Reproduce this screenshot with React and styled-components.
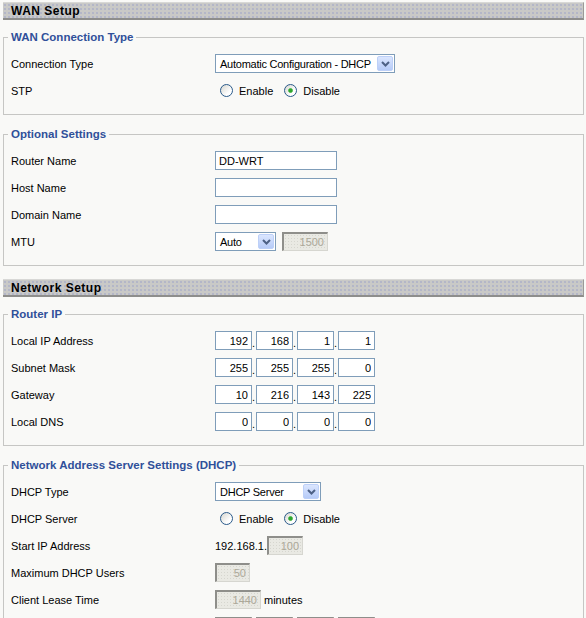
import React from "react";
import styled, { createGlobalStyle } from "styled-components";

const GlobalStyle = createGlobalStyle`
  html, body {
    margin: 0;
    padding: 0;
    background: #f9f9f7;
  }
  body {
    font-family: "Liberation Sans", Arial, sans-serif;
    font-size: 11px;
    color: #000;
  }
`;

const Page = styled.div`
  padding: 2px 2px 0 3px;
  height: 616px;
  overflow: hidden;
`;

const SectionBar = styled.h2`
  margin: 0 0 11px;
  height: 18px;
  box-sizing: border-box;
  padding-left: 8px;
  display: flex;
  align-items: center;
  font-size: 12px;
  font-weight: bold;
  letter-spacing: 0.5px;
  color: #000;
  background-color: #c9c9c7;
  background-image: radial-gradient(#b3b6c8 0.7px, transparent 0.9px);
  background-size: 4px 4px;
  border-top: 1px solid #d8d8d6;
  border-right: 1px solid #9a9a98;
  border-bottom: 2px solid #8e8e8c;
`;

const Group = styled.fieldset`
  margin: 0 0 13px;
  padding: 6px 7px 10px;
  border: 1px solid #c6c6c4;
  min-width: 0;
`;

const Legend = styled.legend`
  padding: 0 3px;
  margin-left: -3px;
  line-height: 13px;
  font-weight: bold;
  font-size: 11.5px;
  color: #30509a;
`;

const Row = styled.div`
  display: flex;
  align-items: center;
  height: 27px;
`;

const Label = styled.div`
  width: 204px;
  flex: none;
`;

const Control = styled.div`
  display: flex;
  align-items: center;
  gap: ${({ $gap }) => $gap || 0}px;
`;

const SelectBox = styled.div`
  display: inline-flex;
  align-items: center;
  width: ${({ $w }) => $w}px;
  height: 19px;
  box-sizing: border-box;
  border: 1px solid #7f9db9;
  background: #fff;
`;

const SelectText = styled.span`
  flex: 1;
  padding-left: 4px;
  letter-spacing: -0.25px;
  white-space: nowrap;
  overflow: hidden;
`;

const DropButton = styled.span`
  width: 16px;
  height: 15px;
  margin-right: 1px;
  box-sizing: border-box;
  border: 1px solid #bdd0f8;
  border-radius: 2px;
  background: linear-gradient(#dbe6fe, #b6cbf8);
  display: flex;
  align-items: center;
  justify-content: center;
  flex: none;
`;

const TextField = styled.input`
  width: ${({ $w }) => $w}px;
  height: 19px;
  box-sizing: border-box;
  margin: 0;
  padding: 0 3px;
  border: 1px solid #7f9db9;
  background: #fff;
  font-family: "Liberation Sans", Arial, sans-serif;
  font-size: 11px;
  color: #000;
  text-align: ${({ $align }) => $align || "left"};
  outline: none;

  &:disabled {
    color: #aca899;
    background-color: #e9e9e3;
    background-image: radial-gradient(#d6d6cf 0.6px, transparent 0.8px);
    background-size: 3px 3px;
    border-width: 2px 1px 1px 2px;
    border-color: #8e8e8a #d6d6d0 #d6d6d0 #8e8e8a;
    padding-right: 3px;
  }
`;

const Dot = styled.span`
  width: 4px;
  align-self: flex-end;
  line-height: 14px;
  text-align: left;
`;

const RadioOption = styled.label`
  display: inline-flex;
  align-items: center;
  gap: 6px;
  margin-left: 5px;

  & + & {
    margin-left: 11px;
  }
`;

const RadioCircle = styled.span`
  width: 13px;
  height: 13px;
  box-sizing: border-box;
  border-radius: 50%;
  border: 1px solid #2a5a8a;
  background: ${({ $on }) =>
    $on
      ? "radial-gradient(circle, #2ea62e 0 1.6px, #79c879 2.2px, transparent 2.8px), linear-gradient(135deg, #d6d6cf, #ffffff 70%)"
      : "linear-gradient(135deg, #d6d6cf, #ffffff 70%)"};
`;

const Suffix = styled.span`
  margin-left: 3px;
`;

const Chevron = () => (
  <svg width="9" height="6" viewBox="0 0 9 6">
    <path d="M1 1 L4.5 4.5 L8 1" stroke="#4d6185" strokeWidth="2" fill="none" />
  </svg>
);

const Select = ({ width, value }) => (
  <SelectBox $w={width}>
    <SelectText>{value}</SelectText>
    <DropButton>
      <Chevron />
    </DropButton>
  </SelectBox>
);

const Radios = ({ checked }) => (
  <Control>
    <RadioOption>
      <RadioCircle $on={checked === "enable"} />
      Enable
    </RadioOption>
    <RadioOption>
      <RadioCircle $on={checked === "disable"} />
      Disable
    </RadioOption>
  </Control>
);

const IpField = ({ values, disabled }) => (
  <Control>
    {values.map((v, i) => (
      <React.Fragment key={i}>
        <TextField $w={37} $align="right" value={v} readOnly disabled={disabled} />
        {i < values.length - 1 && <Dot>.</Dot>}
      </React.Fragment>
    ))}
  </Control>
);

const Field = ({ label, children }) => (
  <Row>
    <Label>{label}</Label>
    {children}
  </Row>
);

export default function App() {
  return (
    <>
      <GlobalStyle />
      <Page>
        <SectionBar>WAN Setup</SectionBar>

        <Group>
          <Legend>WAN Connection Type</Legend>
          <Field label="Connection Type">
            <Select width={180} value="Automatic Configuration - DHCP" />
          </Field>
          <Field label="STP">
            <Radios checked="disable" />
          </Field>
        </Group>

        <Group>
          <Legend>Optional Settings</Legend>
          <Field label="Router Name">
            <TextField $w={122} value="DD-WRT" readOnly />
          </Field>
          <Field label="Host Name">
            <TextField $w={122} value="" readOnly />
          </Field>
          <Field label="Domain Name">
            <TextField $w={122} value="" readOnly />
          </Field>
          <Field label="MTU">
            <Control $gap={6}>
              <Select width={61} value="Auto" />
              <TextField $w={46} $align="right" value="1500" readOnly disabled />
            </Control>
          </Field>
        </Group>

        <SectionBar>Network Setup</SectionBar>

        <Group>
          <Legend>Router IP</Legend>
          <Field label="Local IP Address">
            <IpField values={["192", "168", "1", "1"]} />
          </Field>
          <Field label="Subnet Mask">
            <IpField values={["255", "255", "255", "0"]} />
          </Field>
          <Field label="Gateway">
            <IpField values={["10", "216", "143", "225"]} />
          </Field>
          <Field label="Local DNS">
            <IpField values={["0", "0", "0", "0"]} />
          </Field>
        </Group>

        <Group>
          <Legend>Network Address Server Settings (DHCP)</Legend>
          <Field label="DHCP Type">
            <Select width={106} value="DHCP Server" />
          </Field>
          <Field label="DHCP Server">
            <Radios checked="disable" />
          </Field>
          <Field label="Start IP Address">
            <Control>
              <span>192.168.1.</span>
              <TextField $w={36} $align="right" value="100" readOnly disabled />
            </Control>
          </Field>
          <Field label="Maximum DHCP Users">
            <TextField $w={35} $align="right" value="50" readOnly disabled />
          </Field>
          <Field label="Client Lease Time">
            <Control>
              <TextField $w={46} $align="right" value="1440" readOnly disabled />
              <Suffix>minutes</Suffix>
            </Control>
          </Field>
          <Field label="Static DNS 1">
            <IpField values={["0", "0", "0", "0"]} disabled />
          </Field>
        </Group>
      </Page>
    </>
  );
}
